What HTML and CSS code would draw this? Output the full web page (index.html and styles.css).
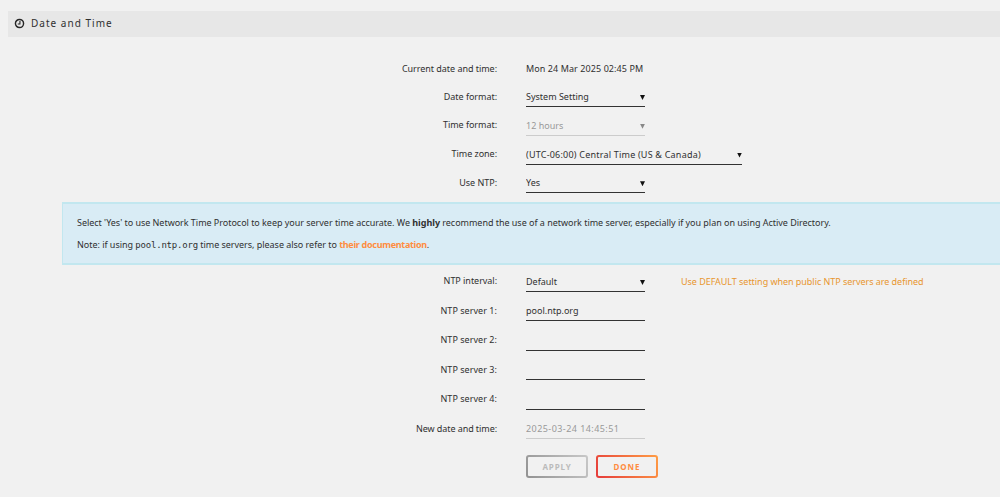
FILE: index.html
```html
<!DOCTYPE html>
<html lang="en">
<head>
    <meta charset="UTF-8">
    <title>Date and Time</title>
    <link rel="stylesheet" href="styles.css">
</head>
<body>
<div class="title">
    <svg class="clock" viewBox="0 0 10 10"><circle cx="5" cy="5" r="3.7"/><path d="M5.4 2.8V5.4H3.4"/></svg>
    <span class="title-text">Date and Time</span>
</div>
<form>
    <div class="row current">
        <label>Current date and time:</label>
        <span class="value">Mon 24 Mar 2025 02:45 PM</span>
    </div>
    <div class="row">
        <label>Date format:</label>
        <div class="select"><select><option>System Setting</option></select></div>
    </div>
    <div class="row">
        <label>Time format:</label>
        <div class="select disabled"><select disabled><option>12 hours</option></select></div>
    </div>
    <div class="row">
        <label>Time zone:</label>
        <div class="select wide"><select><option>(UTC-06:00) Central Time (US &amp; Canada)</option></select></div>
    </div>
    <div class="row">
        <label>Use NTP:</label>
        <div class="select"><select><option>Yes</option></select></div>
    </div>
    <div class="help">
        <p>Select 'Yes' to use Network Time Protocol to keep your server time accurate. We <b>highly</b> recommend the use of a network time server, especially if you plan on using Active Directory.</p>
        <p class="note">Note: if using <code>pool.ntp.org</code> time servers, please also refer to <a href="#">their documentation</a>.</p>
    </div>
    <div class="row interval">
        <label>NTP interval:</label>
        <div class="select"><select><option>Default</option></select></div>
        <span class="warn">Use DEFAULT setting when public NTP servers are defined</span>
    </div>
    <div class="row server">
        <label>NTP server 1:</label>
        <input type="text" value="pool.ntp.org">
    </div>
    <div class="row server">
        <label>NTP server 2:</label>
        <input type="text">
    </div>
    <div class="row server">
        <label>NTP server 3:</label>
        <input type="text">
    </div>
    <div class="row server">
        <label>NTP server 4:</label>
        <input type="text">
    </div>
    <div class="row server">
        <label class="new-date">New date and time:</label>
        <input class="date" type="text" value="2025-03-24 14:45:51" disabled>
    </div>
    <div class="buttons">
        <button type="button" class="apply" disabled>APPLY</button>
        <button type="button" class="done">DONE</button>
    </div>
</form>
</body>
</html>
```
FILE: styles.css
```css
* {
    box-sizing: border-box;
    margin: 0;
    padding: 0;
}

body {
    height: 497px;
    overflow: hidden;
    background: #f1f1f1;
    color: #303030;
    font: 9px/14px "Noto Sans", sans-serif;
}
.title {
    display: flex;
    align-items: center;
    height: 26px;
    margin: 11px 0 0 8px;
    padding: 0 0 2px 6px;
    background: #e7e7e7;
}
.clock {
    width: 11px;
    height: 11px;
    margin-right: 6px;
    fill: none;
    stroke: #252525;
    stroke-width: 1.3;
}
.clock path {
    stroke-width: 1;
}
.title-text {
    font-size: 10px;
    letter-spacing: 1.02px;
}

.row {
    display: flex;
    align-items: flex-end;
    height: 28.75px;
}
.row label {
    width: 497px;
    margin-right: 29px;
    padding-bottom: 3.5px;
    letter-spacing: -.04px;
    text-align: right;
}
.current {
    height: 41.3px;
}
.current label, .value {
    padding-bottom: 2px;
}
.value {
    letter-spacing: .08px;
}
.select {
    position: relative;
    width: 119px;
}
.wide {
    width: 216px;
}
.select:after {
    content: "";
    position: absolute;
    right: 0;
    top: 7px;
    width: 5px;
    height: 5px;
    background: #111;
    clip-path: polygon(0 0, 100% 0, 50% 100%);
}
.disabled:after {
    background: #888;
}
select, input {
    display: block;
    width: 119px;
    height: 19px;
    border: 0;
    border-bottom: 1px solid #333;
    border-radius: 0;
    outline: 0;
    background: none;
    color: #303030;
    font: inherit;
    appearance: none;
}
input {
    padding-bottom: 1px;
}
.select select {
    width: 100%;
}
.wide select {
    letter-spacing: .21px;
}
select:disabled, input:disabled {
    border-color: #ccc;
    color: #999;
    opacity: 1;
}
.date {
    letter-spacing: .44px;
}

.help {
    height: 63px;
    margin: 8.7px 0 0 62px;
    padding: 12px 14px 0;
    border: 2px solid #c2e7ef;
    border-width: 2px 0 2px 1px;
    background: #d9ecf5;
    letter-spacing: -.03px;
}
.help p {
    white-space: nowrap;
}
.help .note {
    margin-top: 8px;
}
.help code {
    font: 9px/14px "DejaVu Sans Mono", monospace;
    letter-spacing: -.2px;
}
.help a {
    color: #ff8c3f;
    font-weight: bold;
    letter-spacing: -.3px;
    text-decoration: none;
}
.interval {
    height: 27px;
}
.warn {
    margin-left: 36px;
    padding-bottom: 3px;
    color: #e8962f;
    letter-spacing: -.04px;
}
.server {
    height: 29.45px;
}
.server label {
    letter-spacing: .04px;
}
.server .new-date {
    letter-spacing: -.07px;
}

.buttons {
    display: flex;
    gap: 8px;
    margin: 16px 0 0 526px;
}
.buttons button {
    width: 62px;
    height: 23px;
    border: 2px solid transparent;
    border-radius: 3px;
    font: bold 8px/14px "Noto Sans", sans-serif;
    letter-spacing: .9px;
}
.apply {
    background: linear-gradient(#f1f1f1, #f1f1f1) padding-box, linear-gradient(60deg, #929292, #c8c8c8) border-box;
    color: #bbb;
}
.done {
    background: linear-gradient(#f1f1f1, #f1f1f1) padding-box, linear-gradient(60deg, #e53b3b, #ff9d45) border-box;
    color: #ff8c3f;
}
```
